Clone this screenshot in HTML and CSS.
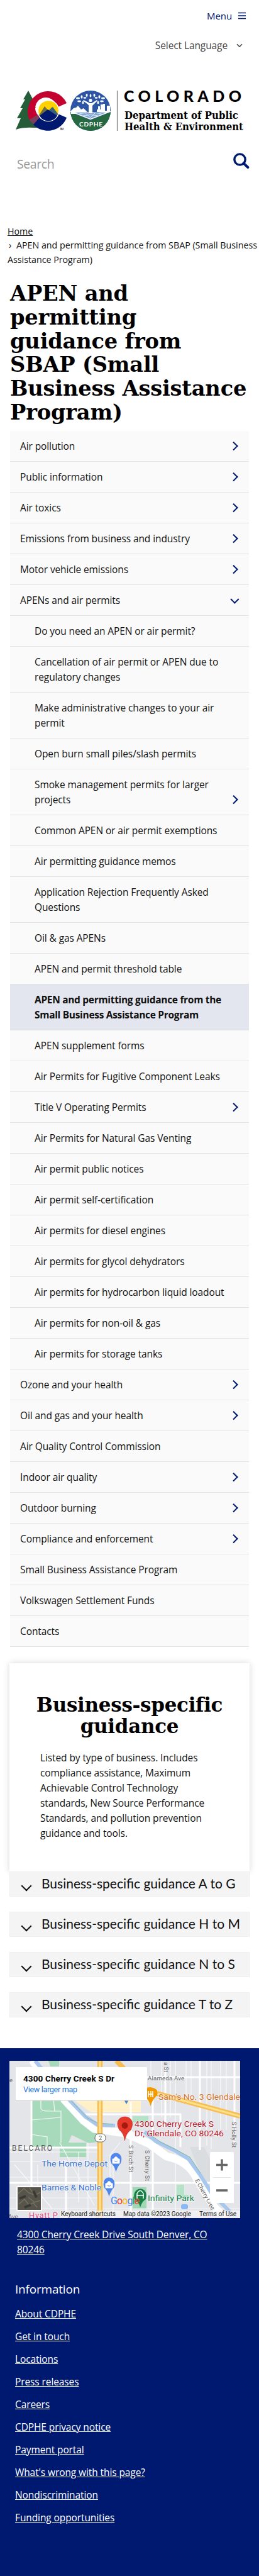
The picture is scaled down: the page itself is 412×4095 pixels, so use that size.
FILE: index.html
```html
<!DOCTYPE html>
<html lang="en">
<head>
<meta charset="utf-8">
<title>APEN and permitting guidance from SBAP</title>
<link rel="stylesheet" href="styles.css">
</head>
<body>
<header class="site-header">
  <div class="menu-row"><a class="menu-link">Menu</a>
    <svg width="12" height="12" viewBox="0 0 12 12"><path d="M0 1.500h12M0 6h12M0 10.500h12" stroke="#001970" stroke-width="1.700"/></svg></div>
  <div class="lang-row"><span>Select Language</span>
    <svg width="10" height="7" viewBox="0 0 10 7"><path d="M1 1.200 5 5.200 9 1.200" fill="none" stroke="#444" stroke-width="1.500"/></svg></div>
  <svg class="brand" width="364" height="66" viewBox="0 0 364 66">
    <path d="M20 0 28 15h-3l7 13h-3l8 16h-4l7 15H28Q12 58 0 62l8-18H2l9-16H7l8-14h-3z" fill="#245d38"/>
    <path d="M22 47A32 32 0 1 1 81 20L65 27A17 17 0 1 0 36 40z" fill="#c3002f"/>
    <path d="M27 53A32 32 0 0 0 81 43L65 36A16 16 0 0 1 37 42z" fill="#001970"/>
    <path d="M22 46 36 38 38 43 28 54Q24 50 22 46z" fill="#7b3f5b"/>
    <circle cx="52" cy="32" r="16.600" fill="#ffd100" stroke="#fff" stroke-width="1.500"/>
    <path d="M37 39 46 25l6 7 6-6 9 12-4 5H41z" fill="#6d713f"/>
    <path d="M54 31 59 26l8 11-4 6z" fill="#35647e"/>
    <path d="M38 40 51 30 66 40A16 16 0 0 1 38 40z" fill="#001970"/>
    <text x="70" y="63" class="tm" textLength="6">TM</text>
    <clipPath id="seal"><circle cx="119" cy="32" r="32"/></clipPath>
    <g clip-path="url(#seal)">
      <path d="M87 0h64v64H87z" fill="#2c56a4"/>
      <path d="M87 34 119 47 151 34V64H87z" fill="#26683f"/>
      <path d="M88 32l4-4 4-1 3-3 5 6 4-2 6 6v3H88zM129 34V30h2v-5h3v5h1V22h4v-1h3v11h3v-8h5v10l-8 2z" fill="#fff"/>
      <path d="M93 35 119 34l26 1-26 10z" fill="#84a8d4"/>
      <path d="M87 33 119 45.500 151 33" fill="none" stroke="#fff" stroke-width="1.600"/>
      <path d="M101 37q18-4 35 0M107 40q12-3 24 0M110 35l9 8M127 35l-8 8" stroke="#e8f0fa" fill="none" stroke-width=".8"/>
      <path d="M116 36V23L107 16l1-1 8 4 2 1 3 0 8-5 1 1-8 8 0 12z" fill="#fff"/>
      <circle cx="119" cy="15.500" r="2.600" fill="#fff"/>
      <g fill="#fff"><ellipse cx="99" cy="12" rx="3" ry="1.600"/><ellipse cx="101" cy="17" rx="3" ry="1.400"/><ellipse cx="107" cy="19" rx="1.500" ry="2.200"/><ellipse cx="105" cy="10" rx="1.500" ry="2.700"/><ellipse cx="110" cy="11.500" rx="2.500" ry="1.300"/><ellipse cx="113" cy="7.500" rx="1.500" ry="2.400"/><ellipse cx="119" cy="8" rx="1.400" ry="2.600"/><ellipse cx="125" cy="7.500" rx="1.500" ry="2.400"/><ellipse cx="128" cy="11.500" rx="2.500" ry="1.300"/><ellipse cx="133" cy="10" rx="1.500" ry="2.700"/><ellipse cx="139" cy="12" rx="3" ry="1.600"/><ellipse cx="137" cy="17" rx="3" ry="1.400"/><ellipse cx="131" cy="19" rx="1.500" ry="2.200"/></g>
    </g>
    <text x="101" y="57" class="seal-name" textLength="37">CDPHE</text>
    <path d="M161.500 0V64" stroke="#777" stroke-width="1.200"/>
    <text x="172" y="18.300" class="state-name" textLength="187">COLORADO</text>
    <text x="173" y="45.300" class="dept-name" textLength="181" lengthAdjust="spacingAndGlyphs">Department of Public</text>
    <text x="173" y="63.300" class="dept-name" textLength="189" lengthAdjust="spacingAndGlyphs">Health &amp; Environment</text>
  </svg>
  <div class="search-row"><span>Search</span>
    <svg width="26" height="26" viewBox="0 0 26 26"><circle cx="10.500" cy="10.500" r="8.600" fill="none" stroke="#001970" stroke-width="3.400"/><path d="M16.500 16.500 23.300 23" stroke="#001970" stroke-width="4" stroke-linecap="round"/></svg></div>
</header>
<main>
  <nav class="breadcrumb"><a>Home</a><br><span class="sep">›</span>APEN and permitting guidance from SBAP (Small Business<br>Assistance Program)</nav>
  <h1>APEN and<br>permitting<br>guidance from<br>SBAP (Small<br>Business Assistance<br>Program)</h1>
  <ul class="side-nav">
    <li class="more">Air pollution</li>
    <li class="more">Public information</li>
    <li class="more">Air toxics</li>
    <li class="more">Emissions from business and industry</li>
    <li class="more">Motor vehicle emissions</li>
    <li class="more open">APENs and air permits</li>
    <li class="sub">Do you need an APEN or air permit?</li>
    <li class="sub">Cancellation of air permit or APEN due to<br>regulatory changes</li>
    <li class="sub">Make administrative changes to your air<br>permit</li>
    <li class="sub">Open burn small piles/slash permits</li>
    <li class="sub more">Smoke management permits for larger<br>projects</li>
    <li class="sub">Common APEN or air permit exemptions</li>
    <li class="sub">Air permitting guidance memos</li>
    <li class="sub">Application Rejection Frequently Asked<br>Questions</li>
    <li class="sub">Oil &amp; gas APENs</li>
    <li class="sub">APEN and permit threshold table</li>
    <li class="sub current">APEN and permitting guidance from the<br>Small Business Assistance Program</li>
    <li class="sub">APEN supplement forms</li>
    <li class="sub">Air Permits for Fugitive Component Leaks</li>
    <li class="sub more">Title V Operating Permits</li>
    <li class="sub">Air Permits for Natural Gas Venting</li>
    <li class="sub">Air permit public notices</li>
    <li class="sub">Air permit self-certification</li>
    <li class="sub">Air permits for diesel engines</li>
    <li class="sub">Air permits for glycol dehydrators</li>
    <li class="sub">Air permits for hydrocarbon liquid loadout</li>
    <li class="sub">Air permits for non-oil &amp; gas</li>
    <li class="sub">Air permits for storage tanks</li>
    <li class="more">Ozone and your health</li>
    <li class="more">Oil and gas and your health</li>
    <li>Air Quality Control Commission</li>
    <li class="more">Indoor air quality</li>
    <li class="more">Outdoor burning</li>
    <li class="more">Compliance and enforcement</li>
    <li>Small Business Assistance Program</li>
    <li>Volkswagen Settlement Funds</li>
    <li>Contacts</li>
  </ul>
  <section class="card">
    <h2>Business-specific<br>guidance</h2>
    <p>Listed by type of business. Includes<br>compliance assistance, Maximum<br>Achievable Control Technology<br>standards, New Source Performance<br>Standards, and pollution prevention<br>guidance and tools.</p>
  </section>
  <div class="accordion">
    <div class="acc">Business-specific guidance A to G</div>
    <div class="acc">Business-specific guidance H to M</div>
    <div class="acc">Business-specific guidance N to S</div>
    <div class="acc">Business-specific guidance T to Z</div>
  </div>
</main>
<footer class="site-footer">
  <svg class="map" width="367" height="250" viewBox="0 0 367 250">
    <rect width="367" height="250" fill="#e4e5e9"/>
    <path d="M62 0h17v9H65zM35 60h55l12 25 25 25 14 5v14l-15 2-27-13-5 12h28v23H80v-16H35z" fill="#a6dabb"/>
    <path d="M100 60h109v22H130z" fill="#fff0c8"/>
    <path d="M196 88h25v10h-25zM266 197h12v16h7v6h-19z" fill="#b6e2c8"/>
    <rect x="196" y="201" width="22" height="35" fill="#9fd6b4"/>
    <path d="M287 137 310 137 330 180 318 200 300 170z" fill="#d9dde0"/>
    <g fill="none" stroke="#f7f8fa" stroke-width="1.200">
      <path d="M242 0v90M256 0v90M264 0v250M281 0v60M289 0v60M314 0v135M321 0v140M336 0v110M345 0v110M225 0v25M0 145h140M0 160h130M0 185h140M0 218h140M0 235h367M8 165l60 70M45 165v60M80 130l55 100M110 145v80M125 130v110M165 150v100M176 130l-16 20v50"/>
      <path d="M50 60v15q0 5 12 5h20v50M35 94l46-4M35 117l25 4v16M70 60l2 20"/>
    </g>
    <g fill="none" stroke="#fff">
      <path d="M0 194h367M120 85h152v52M303 0v142M0 138h145M35 60v140M90 160v90M228 60v190M193 65v185M248 10v95M358 0v130M190 26h177" stroke-width="3"/>
      <path d="M86 60 118 95 135 108l50 7 38 17 27 20q35 7 48 35 15 25 28 46l18 18" stroke-width="13"/>
      <path d="M35 0 55 27" stroke-width="9"/>
    </g>
    <path d="M93 60 121 89 140 102 168 103M215 113 233 128 262 142 285 156 303 181 322 211 352 241M41 0 56 18" fill="none" stroke="#a8c7ee" stroke-width="6"/>
    <path d="M95 60 124 91 141 99 165 101M218 113 240 129 264 141 287 153 304 179" fill="none" stroke="#83b79a" stroke-width="1"/>
    <path d="M144 0v250" stroke="#f7bd52" stroke-width="8.500"/><path d="M144 0v250" stroke="#fde293" stroke-width="3"/>
    <path d="M170 0 182 12M235 52 367 88" stroke="#f7bd52" stroke-width="8"/><path d="M235 52 367 88" stroke="#fde08a" stroke-width="3"/>
    <rect x="136" y="116" width="17" height="13" rx="6" fill="#fff" stroke="#666"/><text x="142" y="126" class="road">2</text>
    <text x="0" y="34" class="road">e</text><text x="220" y="31" class="road" textLength="58">Alameda Ave</text>
    <text class="road" transform="translate(246 2) rotate(90)">a St</text>
    <text class="road" transform="translate(354 97) rotate(90)" textLength="41">S Holly St</text>
    <text class="road" transform="translate(190 134) rotate(90)" textLength="43">S Birch St</text>
    <text class="road" transform="translate(216 142) rotate(90)" textLength="49">S Cherry St</text>
    <text class="road" transform="translate(295 190) rotate(61)" textLength="57">E Cherry Cree.</text>
    <text x="4" y="143" class="area" textLength="64">BELCARO</text>
    <text x="-2" y="251" class="road">Ave</text>
    <path d="M181 60h10l-5 9z" fill="#4285c8"/>
    <path d="M224.500 72Q222 61 214 56 206 43 224 42 240 44 234 56 227 62 224.500 72z" fill="#f29900"/><path d="M221 48v10M225 48v10M221 53h7M228 48v10" stroke="#fff" stroke-width="1.500"/>
    <text x="237" y="62" class="poi" fill="#d6732a" textLength="130" lengthAdjust="spacingAndGlyphs">Sam's No. 3 Glendale</text>
    <text x="51" y="168" class="poi" fill="#3b74d1" textLength="105" lengthAdjust="spacingAndGlyphs">The Home Depot</text>
    <text x="51" y="206" class="poi" fill="#3b74d1" textLength="95" lengthAdjust="spacingAndGlyphs">Barnes &amp; Noble</text>
    <g id="shop"><path d="M169.500 177Q167 167 162 163C154 141 185 141 177 163 172 167 169.500 177 169.500 177z" fill="#4f86ec"/><path d="M164 156h11v7h-11zM166 156q3.500-7 7 0" fill="#fff" stroke="#fff"/><path d="M167 159q2.500 3 5 0" fill="none" stroke="#4f86ec"/></g>
    <use href="#shop" x="-11" y="39"/>
    <path d="M208 234Q207 225 199 220C193 199 223 197 217 220 209 225 208 234 208 234z" fill="#168045"/><path d="M203 219v-8q5-9 10 0v8M202 214h12" stroke="#fff" fill="none" stroke-width="1.500"/>
    <text x="220" y="223" class="poi" fill="#188049" textLength="74" lengthAdjust="spacingAndGlyphs">Infinity Park</text>
    <rect x="273" y="228" width="11" height="8" rx="3" fill="#8ab8f5"/>
    <path d="M183.500 127Q182 115 175 110C160 82 207 82 193 110 185 115 183.500 127 183.500 127z" fill="#e8392d" stroke="#b8271f" stroke-width=".6"/><circle cx="183.500" cy="103" r="5" fill="#a5190e"/>
    <text x="199" y="105" class="poi" fill="#b9202d" textLength="126" lengthAdjust="spacingAndGlyphs">4300 Cherry Creek S</text>
    <text x="199" y="120" class="poi" fill="#b9202d" textLength="142" lengthAdjust="spacingAndGlyphs">Dr, Glendale, CO 80246</text>
    <text x="31" y="250" class="poi" fill="#e0447c" textLength="46">Hyatt P</text>
    <text x="161" y="228" class="google" textLength="46"><tspan fill="#4285f4">G</tspan><tspan fill="#ea4335">o</tspan><tspan fill="#fbbc05">o</tspan><tspan fill="#4285f4">g</tspan><tspan fill="#34a853">l</tspan><tspan fill="#ea4335">e</tspan></text>
    <path d="M80 238h287v12H80z" fill="#f5f5f5" opacity=".7"/>
    <text x="82" y="247" class="legal" textLength="87">Keyboard shortcuts</text><text x="181" y="247" class="legal" textLength="108">Map data ©2023 Google</text><text x="302" y="247" class="legal" textLength="59">Terms of Use</text>
    <rect x="10" y="11" width="209" height="53" fill="#bbb" opacity=".5"/><rect x="10" y="10" width="209" height="53" rx="1" fill="#fff"/>
    <text x="22" y="33" class="place" textLength="145">4300 Cherry Creek S Dr</text><text x="22" y="50" class="larger" textLength="86">View larger map</text>
    <rect x="11" y="199" width="41" height="40" rx="2" fill="#fff"/><rect x="13" y="201" width="37" height="36" fill="#56544b"/>
    <path d="M13 212l10-9 8 7 8 3M15 228l9-8 7 9 7-3 6 7M32 202l8 12 9-5M30 217l10 8 9-3" fill="none" stroke="#77725f" stroke-width="1.500"/><path d="M16 219l10-4M38 207l5 10M24 233l10-4" stroke="#3a3933" stroke-width="4"/>
    <rect x="319" y="145" width="38" height="81" rx="1.500" fill="#fff"/><path d="M324 185.500h28" stroke="#e6e6e6"/><path d="M329 165.500h18M338 156.500v18M329 206h18" stroke="#666" stroke-width="3.300"/>
  </svg>
  <a class="address">4300 Cherry Creek Drive South Denver, CO<br>80246</a>
  <h3>Information</h3>
  <ul class="links"><li><a>About CDPHE</a></li><li><a>Get in touch</a></li><li><a>Locations</a></li><li><a>Press releases</a></li><li><a>Careers</a></li><li><a>CDPHE privacy notice</a></li><li><a>Payment portal</a></li><li><a>What's wrong with this page?</a></li><li><a>Nondiscrimination</a></li><li><a>Funding opportunities</a></li></ul>
</footer>
</body>
</html>
```

FILE: styles.css
```css
* { box-sizing: border-box; }
body { margin: 0; width: 412px; background: #fff; color: #111; font-family: "Open Sans", sans-serif; font-size: 15.5px; line-height: 24px; letter-spacing: -.1px; }
ul { list-style: none; margin: 0; padding: 0; }
h1, h2, h3, p { margin: 0; }
svg text { letter-spacing: 0; }
.site-header { height: 357px; padding: 13px 15px 0 25px; }
.menu-row { display: flex; justify-content: flex-end; align-items: center; gap: 10px; height: 24px; padding-right: 6px; color: #001970; font-size: 15px; }
.lang-row { display: flex; justify-content: flex-end; align-items: center; gap: 14px; margin-top: 23px; padding-right: 11px; color: #444; }
.brand { display: block; margin-top: 60px; overflow: visible; }
.search-row { display: flex; justify-content: space-between; height: 50px; margin-top: 33px; color: #999; font-size: 19.5px; letter-spacing: -.4px; }
.search-row span { line-height: 36px; padding-left: 2px; }
.search-row svg { margin-top: -9px; }
.search-row { align-items: flex-start; }
.search-row svg { margin-top: 0; }
.tm { font: 5px Roboto, sans-serif; }
.seal-name { font: bold 10px Lato, sans-serif; fill: #fff; }
.state-name { font: 900 25px Lato, sans-serif; }
.dept-name { font: bold 16px "DejaVu Serif", serif; }
.breadcrumb { padding-left: 12px; font-size: 14.3px; line-height: 22.4px; letter-spacing: -.03px; white-space: nowrap; }
.breadcrumb a { text-decoration: underline; }
.sep { display: inline-block; width: 14px; padding-left: 2px; }
h1 { height: 227px; margin: 23.8px 0 0 16px; color: #000; font: bold 33.7px/37.8px "DejaVu Serif", serif; white-space: nowrap; letter-spacing: -.2px; }
.side-nav { margin: 10px 16px 0; }
.side-nav li { position: relative; padding: 12px 0 12px 16px; border-bottom: 1px solid #e4e4e4; background: #fafafa; white-space: nowrap; }
.side-nav li.sub { padding-left: 39px; }
.side-nav li.current { background: #e3e6ee; font-weight: bold; letter-spacing: -.31px; }
.more::after { content: ""; position: absolute; right: 19.3px; bottom: 19.3px; width: 7.5px; height: 7.5px; border: solid #001970; border-width: 2.7px 2.7px 0 0; transform: rotate(45deg); }
.more.open::after { transform: rotate(135deg); right: 17.3px; bottom: 20.5px; }
.card { margin: 26px 15px 0; height: 331px; padding: 49px 49px 0; box-shadow: 0 0 10px rgba(0,0,0,.16); }
h2 { margin: 0 -20px; text-align: center; color: #000; font: bold 31px/34.3px "DejaVu Serif", serif; letter-spacing: -.3px; white-space: nowrap; }
.card p { margin-top: 20.7px; white-space: nowrap; }
.accordion { position: relative; display: flex; flex-direction: column; gap: 24px; padding: 0 15px; }
.acc { position: relative; height: 40px; padding-left: 50px; border: 1px solid #efefef; background: #f4f4f4; font: 21px/36px Lato, sans-serif; letter-spacing: 0; white-space: nowrap; }
.acc::before { content: ""; position: absolute; left: 20px; top: 16px; width: 10px; height: 10px; border: solid #111; border-width: 0 2px 2px 0; transform: rotate(45deg); }
.site-footer { height: 839px; margin-top: 49px; padding-top: 20px; background: #001970; color: #fff; }
.map { display: block; margin-left: 15px; }
.address { display: block; margin: 14px 0 0 27px; text-decoration: underline; letter-spacing: -.14px; white-space: nowrap; }
h3 { margin: 39px 0 0 24px; font-size: 19px; font-weight: 400; line-height: 24px; letter-spacing: -.2px; }
.links { padding: 14.5px 0 0 24px; }
.links li { height: 36px; }
.links a { text-decoration: underline; }
.road { font: 9.5px Roboto, sans-serif; fill: #666; }
.area { font: 12px Roboto, sans-serif; fill: #555; }
.poi { font: 13px Roboto, sans-serif; paint-order: stroke; stroke: rgba(255,255,255,.6); stroke-width: 1.5px; }
.google { font: 16px Roboto, sans-serif; }
.legal { font: 10px Roboto, sans-serif; fill: #111; }
.place { font: bold 13.5px Roboto, sans-serif; }
.larger { font: 12.5px Roboto, sans-serif; fill: #1a73d8; }
```
